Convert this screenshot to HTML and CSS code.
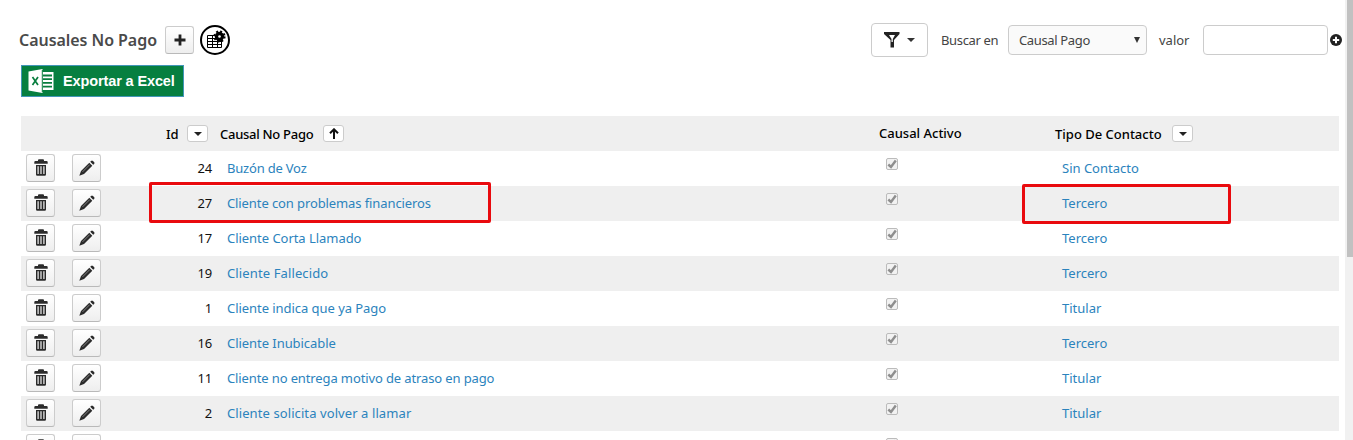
FILE: index.html
```html
<!DOCTYPE html>
<html lang="es">
<head>
<meta charset="utf-8">
<title>Causales No Pago</title>
<link rel="stylesheet" href="styles.css">
</head>
<body>
<svg class="sprites" width="0" height="0">
  <symbol id="trash" viewBox="0 0 14 17"><path d="M4 2V1.200Q4 .3 5 .3h4q1 0 1 .9V2h2.500q1.200 0 1.200 1.200v1.500H.3V3.200Q.3 2 1.500 2zM2 6h10v9.400q0 1.300-1.300 1.300H3.300Q2 16.700 2 15.400zm1.500 1.200v7.800h1.200V7.200zm2.900 0v7.800h1.200V7.200zm2.900 0v7.800h1.200V7.200z" fill="#2b2b2b" fill-rule="evenodd"/></symbol>
  <symbol id="pencil" viewBox="0 0 16 16"><path d="M.3 15.700 2 11 10.300 2.700l3 3L5 13.900zM11.200 1.800l.9-.9q.9-.8 1.800 0l1.200 1.200q.9.900 0 1.800l-.9.900z" fill="#2b2b2b"/><path d="M3.500 11.900 10.700 4.700" stroke="#888" stroke-width=".9"/></symbol>
  <symbol id="check" viewBox="0 0 12 12"><path d="M2.300 6.500 5 9 9.800 2.500" fill="none" stroke="#8e8e8e" stroke-width="2.400"/></symbol>
</svg>
<div class="page">
  <header class="toolbar">
    <h1 class="title">Causales No Pago</h1>
    <button class="btn add"><svg width="12" height="12"><path d="M6 .5v11M.5 6h11" stroke="#222" stroke-width="2.800"/></svg></button>
    <svg class="grid-config" width="30" height="30" viewBox="0 0 30 30">
      <circle cx="15" cy="15" r="14" fill="#fff" stroke="#000" stroke-width="2"/>
      <path d="M7.500 10.500h14v12h-14zM7.500 13.500h14M7.500 16.500h14M7.500 19.500h14M12.500 10.500v12M17.500 10.500v12" fill="#fff" stroke="#000"/>
      <circle cx="19.500" cy="11.500" r="4.700"/><circle cx="19.500" cy="11.500" r="5.100" fill="none" stroke="#000" stroke-width="2" stroke-dasharray="2 2.005"/><circle cx="19.500" cy="11.500" r="1.300" fill="#fff"/>
    </svg>
    <div class="search">
      <button class="filter"><svg width="32" height="18" viewBox="0 0 32 18"><path d="M0 1h15.500v2L10 9v7.500H6.500V9L0 3z" fill="#222"/><path d="M5 4h6L8.800 8v3H7.500V8z" fill="#fff"/><path d="M23 7h8l-4 4z" fill="#333"/></svg></button>
      <span class="label buscar">Buscar en</span>
      <div class="select"><span>Causal Pago</span><svg width="6" height="6"><path d="M0 0h6L3 6z" fill="#333"/></svg></div>
      <span class="label valor">valor</span>
      <input class="value">
      <svg class="plus" width="12" height="12" viewBox="0 0 12 12"><circle cx="6" cy="6" r="6" fill="#222"/><path d="M6 2.800v6.400M2.800 6h6.400" stroke="#fff" stroke-width="2"/></svg>
    </div>
  </header>
  <div class="export">
    <svg width="27" height="24" viewBox="0 0 27 24"><path d="M13 3h12.500v18H13z" fill="#fff"/><path d="M15 6.500h9M15 10.200h9M15 13.900h9M15 17.600h9" stroke="#087d3e" stroke-width="1.800"/><path d="M.5 2.500 14.500 0v24L.5 21.500z" fill="#fff"/><path d="m4.500 8 5.500 8M10 8l-5.500 8" stroke="#087d3e" stroke-width="1.700"/><path d="M14.300 1v22" stroke="#087d3e"/></svg>
    <span>Exportar a Excel</span>
  </div>
  <main class="table" id="table">
    <div class="row head">
      <div class="head-id"><span>Id</span><i class="sort"><svg width="8" height="4"><path d="M0 0h8L4 4z" fill="#222"/></svg></i></div>
      <div class="head-name"><span>Causal No Pago</span><i class="sort"><svg width="10" height="11"><path d="M5 11V1.500M1 5.300 5 1.300l4 4" fill="none" stroke="#111" stroke-width="2"/></svg></i></div>
      <div class="head-active">Causal Activo</div>
      <div class="head-type"><span>Tipo De Contacto</span><i class="sort"><svg width="8" height="4"><path d="M0 0h8L4 4z" fill="#222"/></svg></i></div>
    </div>
  </main>
  <div class="mark mark-name"></div>
  <div class="mark mark-type"></div>
  <div class="scroll"><div class="thumb"></div></div>
</div>
<script src="rows.js"></script>
</body>
</html>
```
FILE: styles.css
```css
* { box-sizing: border-box; }
body { margin: 0; background: #fff; overflow: hidden; font: 13px/18px "Noto Sans", "Open Sans", sans-serif; color: #111; }
button { padding: 0; font: inherit; }
svg { display: block; flex: none; }
.sprites { position: absolute; }
.page { position: relative; display: flow-root; width: 1353px; height: 440px; overflow: hidden; }
.toolbar { display: flex; align-items: center; height: 46px; margin-top: 17px; padding-left: 19px; }
.title { width: 146px; margin: 0; font-size: 16px; line-height: 22px; font-weight: 600; color: #4a4a4a; white-space: nowrap; letter-spacing: -.05px; }
.btn { display: flex; align-items: center; justify-content: center; width: 29px; height: 28px; border: 1px solid #ccc; border-bottom-color: #b9b9b9; border-radius: 3px; background: linear-gradient(#fff, #eee); }
.grid-config { margin-left: 6px; }
.search { display: flex; align-items: center; margin-left: auto; margin-right: 11px; }
.filter { display: flex; align-items: center; justify-content: center; width: 57px; height: 34px; border: 1px solid #ccc; border-radius: 4px; background: #fff; }
.label { color: #444; white-space: nowrap; }
.buscar { width: 67px; padding-left: 13px; box-sizing: content-box; letter-spacing: -.35px; }
.select { display: flex; align-items: center; justify-content: space-between; width: 139px; height: 30px; padding: 0 6px 0 10px; border: 1px solid #ccc; border-radius: 4px; background: #fafafa; color: #444; letter-spacing: -.35px; }
.valor { width: 56px; padding-left: 12px; }
.value { width: 125px; height: 30px; border: 1px solid #ccc; border-radius: 4px; background: #fff; }
.plus { margin-left: 2px; }
.export { display: flex; align-items: center; gap: 8px; width: 163px; height: 32px; margin: 2px 0 19px 21px; padding-left: 6px; border: 1px solid #4296b8; background: #067f40; color: #fff; font: bold 14.500px/20px "Liberation Sans", Arial, sans-serif; white-space: nowrap; letter-spacing: -.12px; }
.table { width: 1318px; margin-left: 21px; }
.row { display: grid; grid-template-columns: 46px 45px 100px 15px 659px 176px 1fr; height: 35px; padding-bottom: 2px; align-items: center; white-space: nowrap; }
.row:nth-child(odd) { background: #efefef; }
.row .btn { margin: 0 0 0 5px; height: 28px; }
.id { text-align: right; letter-spacing: -.2px; }
.name { grid-column: 5; letter-spacing: -.1px; }
.row:nth-child(2) .name { letter-spacing: -.2px; }
.row:nth-child(4) .name { letter-spacing: -.04px; }
.row:nth-child(5) .name { letter-spacing: .12px; }
.row:nth-child(6) .name, .row:nth-child(7) .name { letter-spacing: -.05px; }
.row:nth-child(8) .name { letter-spacing: -.12px; }
.row:nth-child(9) .name { letter-spacing: .09px; }
.name, .type { color: #2b83bd; }
.box { width: 12px; height: 12px; margin: -7px 0 0 0; border: 1px solid #bbb; border-radius: 2px; background: #f2f2f2; }
.box svg { margin: -1px; }
.row.head { grid-template-columns: 145px 54px 659px 176px 1fr; padding-bottom: 0; color: #000; font-weight: 500; }
.head-id, .head-name, .head-type { display: flex; align-items: center; justify-content: space-between; }
.head-id { width: 42px; grid-column: 2; }
.head-name { width: 124px; letter-spacing: -.28px; }
.head-active { padding-bottom: 2px; }
.head-type { width: 138px; }
.sort { display: flex; align-items: center; justify-content: center; width: 21px; height: 17px; border: 1px solid #ccc; border-radius: 3px; background: #fff; }
.mark { position: absolute; border: 3px solid #e90a0e; border-radius: 2px; }
.mark-name { left: 149px; top: 182px; width: 342px; height: 41px; }
.mark-type { left: 1022px; top: 184px; width: 209px; height: 40px; }
.scroll { position: absolute; top: 0; right: 0; width: 8px; height: 440px; background: #f1f1f1; padding-left: 2px; }
.thumb { height: 257px; background: #c1c1c1; }
```
FILE: rows.js
```js
const rows = [
  [24, "Buzón de Voz", "Sin Contacto"],
  [27, "Cliente con problemas financieros", "Tercero"],
  [17, "Cliente Corta Llamado", "Tercero"],
  [19, "Cliente Fallecido", "Tercero"],
  [1, "Cliente indica que ya Pago", "Titular"],
  [16, "Cliente Inubicable", "Tercero"],
  [11, "Cliente no entrega motivo de atraso en pago", "Titular"],
  [2, "Cliente solicita volver a llamar", "Titular"],
  ["", "", ""]
];
document.getElementById("table").insertAdjacentHTML("beforeend", rows.map(([id, name, type]) => `
  <div class="row">
    <button class="btn"><svg width="14" height="17"><use href="#trash"/></svg></button>
    <button class="btn"><svg width="16" height="16"><use href="#pencil"/></svg></button>
    <span class="id">${id}</span>
    <span class="name">${name}</span>
    <span class="box"><svg width="12" height="12"><use href="#check"/></svg></span>
    <span class="type">${type}</span>
  </div>`).join(""));
```
